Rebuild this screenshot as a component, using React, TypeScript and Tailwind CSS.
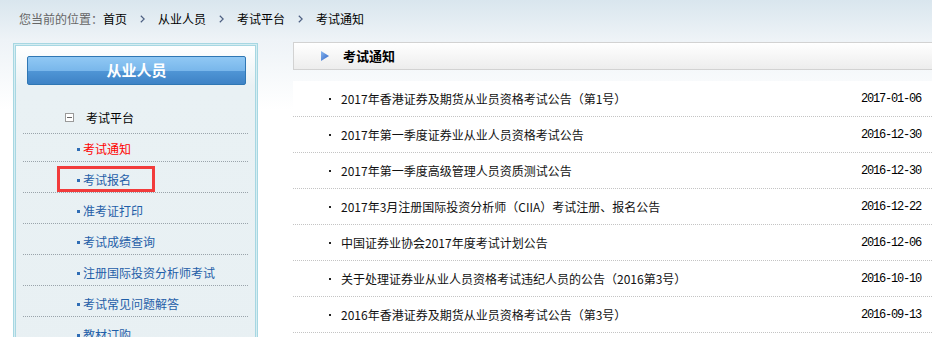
import React from "react";

const crumbs = ["首页", "从业人员", "考试平台", "考试通知"];

const menu = [
  { label: "考试通知", active: true },
  { label: "考试报名", marked: true },
  { label: "准考证打印" },
  { label: "考试成绩查询" },
  { label: "注册国际投资分析师考试" },
  { label: "考试常见问题解答" },
  { label: "教材订购" },
];

const news = [
  { title: "2017年香港证券及期货从业员资格考试公告（第1号）", date: "2017-01-06" },
  { title: "2017年第一季度证券业从业人员资格考试公告", date: "2016-12-30" },
  { title: "2017年第一季度高级管理人员资质测试公告", date: "2016-12-30" },
  { title: "2017年3月注册国际投资分析师（CIIA）考试注册、报名公告", date: "2016-12-22" },
  { title: "中国证券业协会2017年度考试计划公告", date: "2016-12-06" },
  { title: "关于处理证券业从业人员资格考试违纪人员的公告（2016第3号）", date: "2016-10-10" },
  { title: "2016年香港证券及期货从业员资格考试公告（第3号）", date: "2016-09-13" },
];

const Chevron = () => (
  <svg width="5" height="8" viewBox="0 0 5 8" className="mx-[13px]">
    <path d="M0.8 0.8 L4.2 4 L0.8 7.2" fill="none" stroke="#4d5f82" strokeWidth="1.2" />
  </svg>
);

const Sidebar = () => (
  <aside className="ml-[13px] mt-[5px] w-[245px] shrink-0 border border-[#a7d7e2] bg-[#d5edf2] p-px">
    <div className="border border-[#a7d7e2] bg-[linear-gradient(to_bottom,#ffffff_0px,#e9f1f4_40px,#e8f0f3_100%)] pb-10">
      <div className="ml-[11px] mr-[9px] mt-[10px] flex h-[29px] items-center justify-center rounded-[2px] border border-[#2f77b4] bg-[linear-gradient(to_bottom,#90c8f4_0%,#79b7eb_50%,#5096d6_50%,#3e83c6_100%)] text-[15px] font-bold text-white">
        从业人员
      </div>
      <div className="mx-[7px]">
        <div className="mt-[17px] flex h-[32px] items-center border-b border-dotted border-[#9aa4ab] pl-[42px] text-[12px] text-black">
          <span className="mr-[12px] flex h-[9px] w-[9px] items-center justify-center border border-[#9a9a9a] bg-white">
            <span className="h-px w-[5px] bg-[#666]" />
          </span>
          考试平台
        </div>
        {menu.map((m, i) => (
          <div
            key={m.label}
            className={`relative flex items-center border-b border-dotted border-[#9aa4ab] pl-[54px] text-[12px] ${
              i === 0 ? "h-[28px] pt-[3px]" : "h-[31px] pt-[6px]"
            } ${m.active ? "text-[#ff0000]" : "text-[#1f5ea8]"}`}
          >
            <span className="mr-[3px] h-[3px] w-[3px] bg-[#2f6db5]" />
            {m.label}
            {m.marked && (
              <span className="absolute left-[34px] top-[4px] h-[26px] w-[98px] border-[3px] border-[#f23b3b]" />
            )}
          </div>
        ))}
      </div>
    </div>
  </aside>
);

const NewsPanel = () => (
  <section className="ml-[35px] flex-1">
    <div className="mt-[4px] flex h-[28px] items-center border border-r-0 border-[#d2d2d2] bg-[linear-gradient(to_bottom,#ffffff,#ededed)] pl-[27px]">
      <svg width="8" height="10" viewBox="0 0 8 10" className="mr-[14px]">
        <defs>
          <linearGradient id="tri" x1="0" y1="0" x2="1" y2="1">
            <stop offset="0" stopColor="#8ab8f0" />
            <stop offset="1" stopColor="#2d62c4" />
          </linearGradient>
        </defs>
        <polygon points="0,0 8,5 0,10" fill="url(#tri)" />
      </svg>
      <span className="text-[13px] font-bold text-black">考试通知</span>
    </div>
    <ul className="mt-[11px] bg-white">
      {news.map((n) => (
        <li
          key={n.title}
          className="flex h-[36px] items-center border-b border-dotted border-[#c4c4c4] pl-[36px] pr-[11px] text-[12px] text-[#111]"
        >
          <span className="mr-[10px] h-[2px] w-[2px] bg-[#222]" />
          <span className="flex-1">{n.title}</span>
          <span className="font-['Liberation_Mono',monospace] text-[12px] tracking-[-1.2px] text-black">
            {n.date}
          </span>
        </li>
      ))}
    </ul>
  </section>
);

export default function App() {
  return (
    <div className="h-[337px] w-[932px] overflow-hidden bg-[linear-gradient(to_bottom,#d9e6ee_0px,#eef3f7_40px,#ffffff_110px)] font-['Noto_Sans_CJK_SC','Liberation_Sans',sans-serif]">
      <nav className="flex h-[38px] items-center pl-[19px] text-[12px]">
        <span className="text-[#666]">您当前的位置：</span>
        {crumbs.map((c, i) => (
          <React.Fragment key={c}>
            {i > 0 && <Chevron />}
            <span className="text-black">{c}</span>
          </React.Fragment>
        ))}
      </nav>
      <div className="flex">
        <Sidebar />
        <NewsPanel />
      </div>
    </div>
  );
}
